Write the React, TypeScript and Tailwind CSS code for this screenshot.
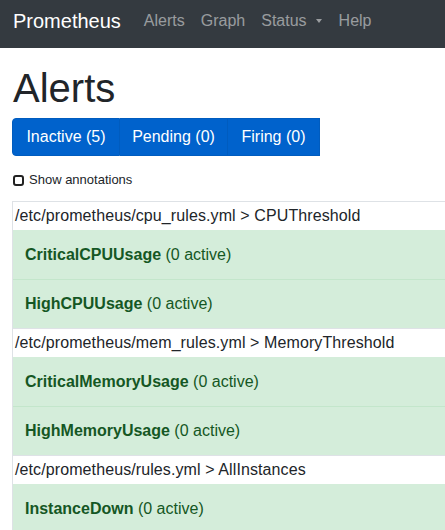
import React from "react";

const groups = [
  {
    file: "/etc/prometheus/cpu_rules.yml > CPUThreshold",
    rules: ["CriticalCPUUsage", "HighCPUUsage"],
  },
  {
    file: "/etc/prometheus/mem_rules.yml > MemoryThreshold",
    rules: ["CriticalMemoryUsage", "HighMemoryUsage"],
  },
  {
    file: "/etc/prometheus/rules.yml > AllInstances",
    rules: ["InstanceDown"],
  },
];

export default function App() {
  return (
    <div
      className="w-[445px] h-[530px] overflow-hidden bg-white text-[#212529]"
      style={{ fontFamily: '"Liberation Sans", Arial, sans-serif' }}
    >
      <nav className="h-[48px] bg-[#343a40] flex items-center pl-[13px] pb-[6px]">
        <span className="text-[20px] text-white leading-none mr-[23px]">Prometheus</span>
        <div className="flex items-center gap-[16px] text-[16px] text-[rgba(255,255,255,0.5)]">
          <span>Alerts</span>
          <span>Graph</span>
          <span className="flex items-center">
            Status
            <span className="ml-[9px] inline-block w-0 h-0 border-l-[3.5px] border-r-[3.5px] border-t-[4px] border-l-transparent border-r-transparent border-t-[rgba(255,255,255,0.5)]" />
          </span>
          <span className="ml-[1px]">Help</span>
        </div>
      </nav>
      <div className="pl-[12px]">
        <h1 className="text-[40px] font-medium leading-[48px] pt-[16px] pl-[1px]">Alerts</h1>
        <div className="mt-[6px] flex w-[308px] h-[38px] text-white text-[16px]">
          <div className="bg-[#0062cc] border border-[#005cbf] rounded-l-[4px] w-[108px] flex items-center justify-center">
            Inactive (5)
          </div>
          <div className="bg-[#0062cc] border-y border-r border-[#005cbf] w-[108px] flex items-center justify-center">
            Pending (0)
          </div>
          <div className="bg-[#0062cc] border-y border-r border-[#005cbf] w-[92px] flex items-center justify-center">
            Firing (0)
          </div>
        </div>
        <label className="mt-[16px] flex items-center text-[13px] leading-[16px] pl-[1px]">
          <span className="w-[11px] h-[11px] border-[2px] border-[#222] rounded-[3px] mr-[5px]" />
          Show annotations
        </label>
        <div className="mt-[13px] border-l border-[#dee2e6] text-[16px]">
          {groups.map((g) => (
            <div key={g.file}>
              <div className="border-t border-[#dee2e6] h-[29px] flex items-center pl-[2px] bg-white tracking-[0.1px]">
                {g.file}
              </div>
              {g.rules.map((r, i) => (
                <div
                  key={r}
                  className={
                    "bg-[#d4edda] h-[49px] flex items-center pl-[12px] text-[#155724] " +
                    (i > 0 ? "border-t border-[#c3e6cb]" : "border-t border-[#d4edda]")
                  }
                >
                  <span className="font-bold">{r}</span>
                  <span>&nbsp;(0 active)</span>
                </div>
              ))}
            </div>
          ))}
        </div>
      </div>
    </div>
  );
}
